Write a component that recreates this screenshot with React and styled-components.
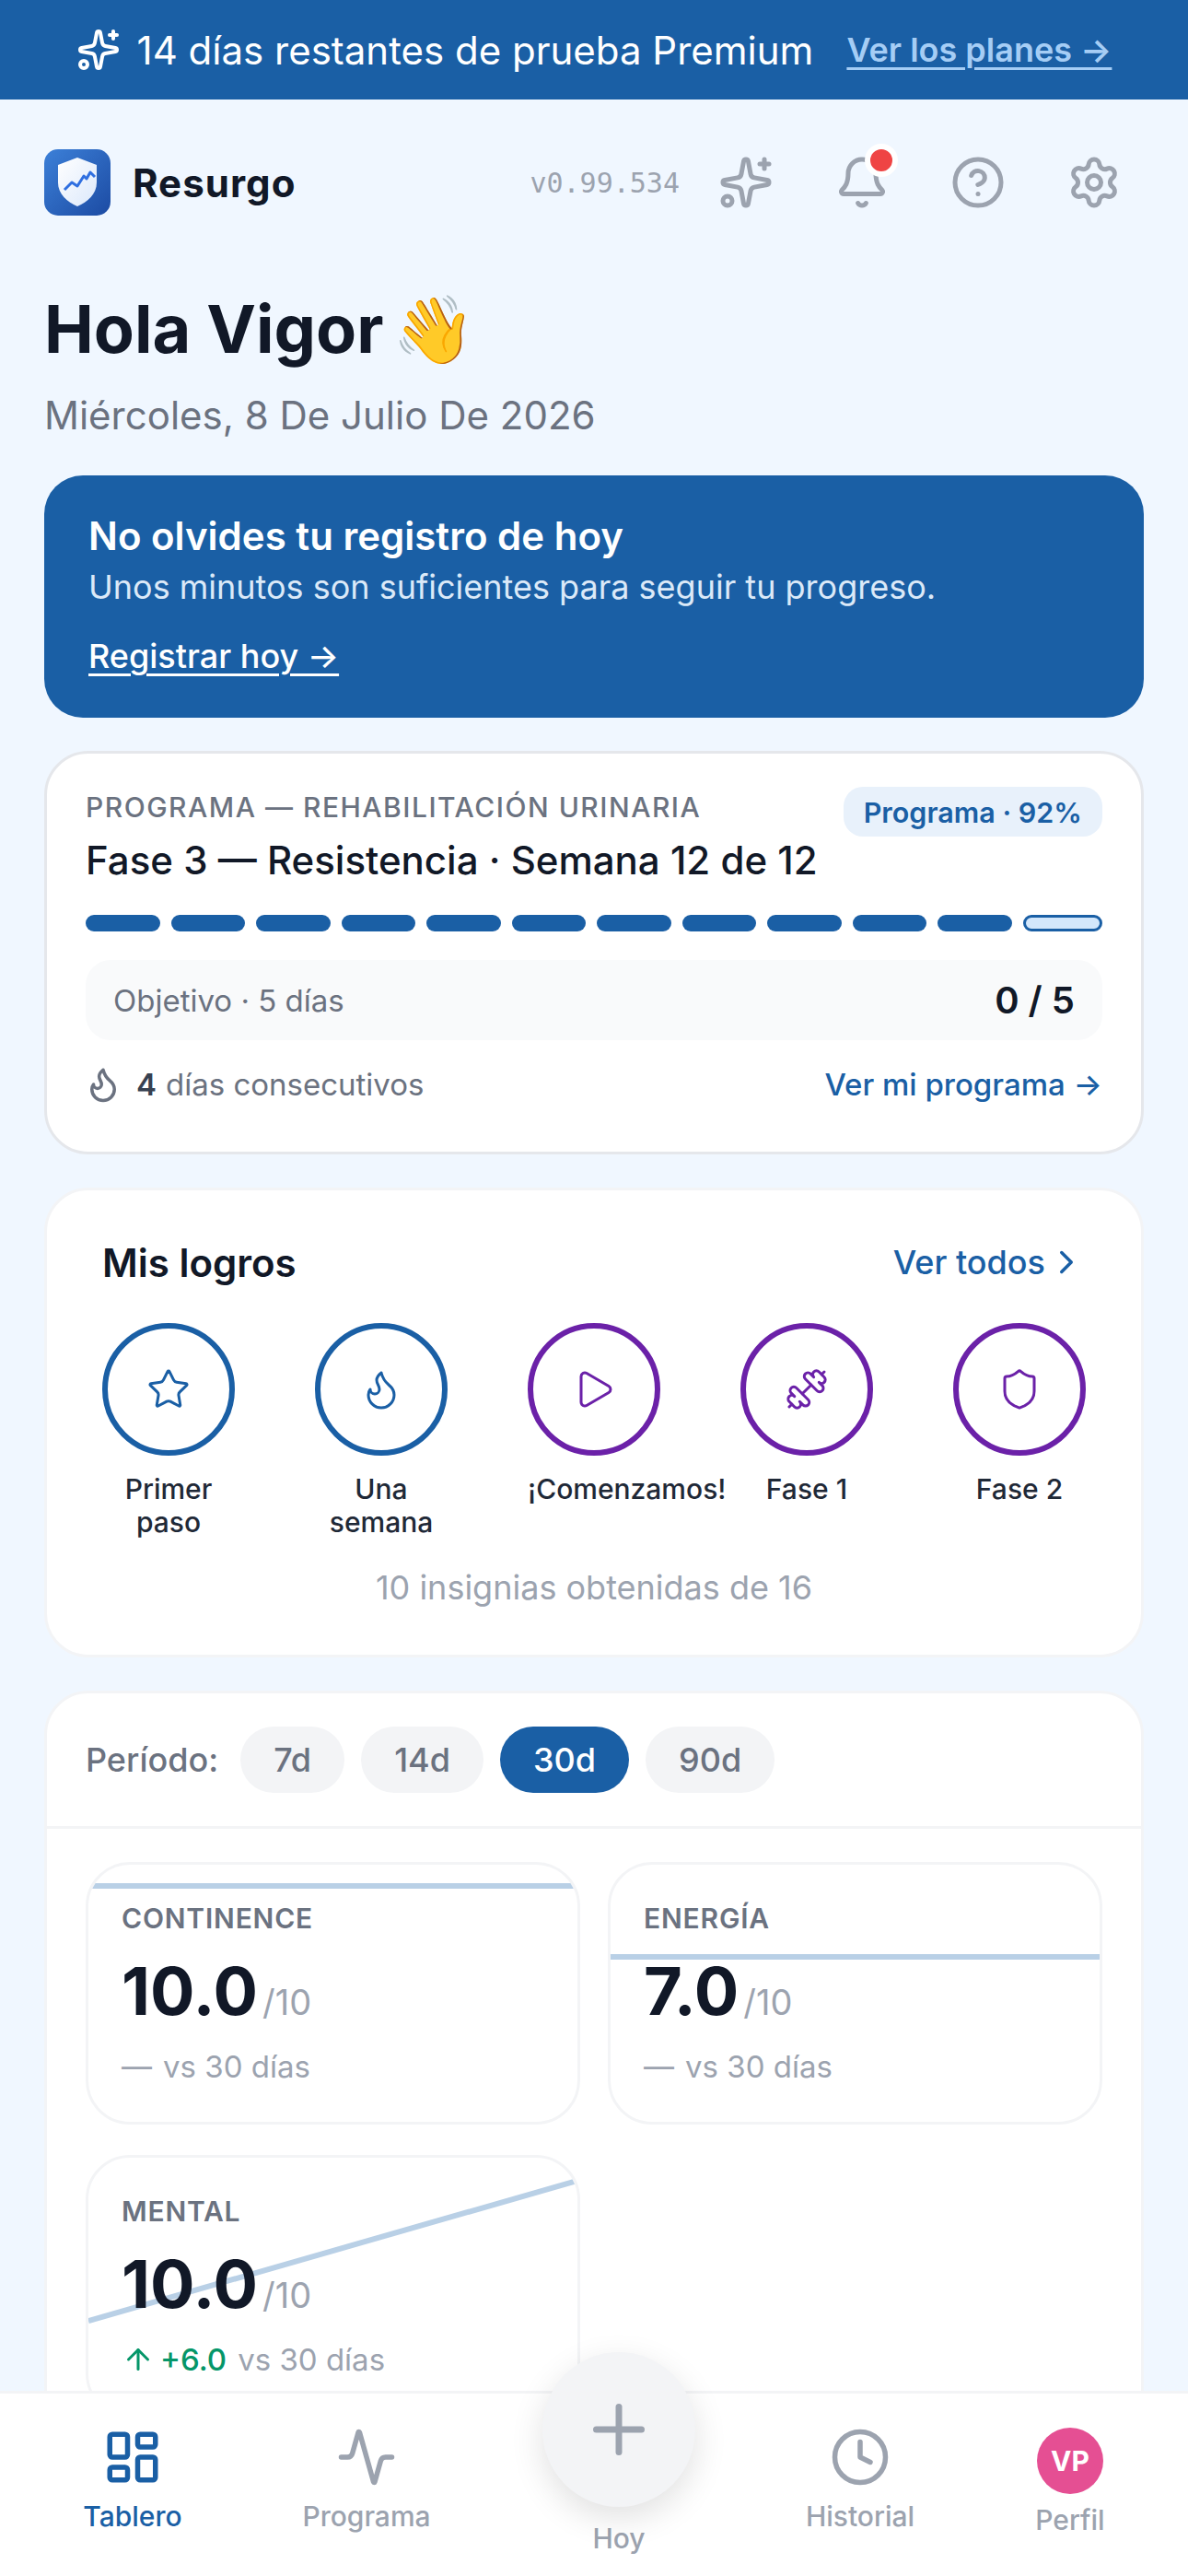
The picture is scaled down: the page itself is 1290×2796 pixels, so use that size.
import React from 'react'
import styled, { createGlobalStyle } from 'styled-components'
import {
  Activity,
  ArrowUp,
  Bell,
  ChevronRight,
  CircleHelp,
  Clock,
  Dumbbell,
  Flame,
  LayoutDashboard,
  Play,
  Plus,
  Settings,
  Shield,
  Sparkles,
  Star,
} from 'lucide-react'

const BLUE = '#1a5fa5'
const PURPLE = '#6b21a8'

const GlobalStyle = createGlobalStyle`
  html, body, #root {
    margin: 0;
    height: 100%;
  }
  body {
    font-family: Inter, "Noto Sans", sans-serif;
    background: #f0f7ff;
    color: #111827;
    overflow: hidden;
  }
  * {
    box-sizing: border-box;
  }
`

const Screen = styled.div`
  height: 2796px;
  display: flex;
  flex-direction: column;
  position: relative;
  overflow: hidden;
`

const TrialBar = styled.div`
  height: 108px;
  flex: none;
  background: ${BLUE};
  color: #fff;
  display: flex;
  align-items: center;
  justify-content: center;
  gap: 36px;
  font-size: 42px;
`

const TrialText = styled.span`
  display: flex;
  align-items: center;
  gap: 18px;
`

const TrialLink = styled.a`
  font-size: 36px;
  font-weight: 600;
  color: #a5cdf5;
  text-decoration: underline;
  text-decoration-thickness: 3px;
  text-underline-offset: 6px;
`

const Content = styled.main`
  flex: 1;
  min-height: 0;
  overflow: hidden;
  padding: 54px 48px 0;
`

const Header = styled.header`
  display: flex;
  align-items: center;
  height: 72px;
`

const Brand = styled.div`
  display: flex;
  align-items: center;
  gap: 24px;
  font-size: 42px;
  font-weight: 700;
  letter-spacing: 1.05px;
  margin-right: auto;
`

const Version = styled.span`
  font-family: "DejaVu Sans Mono", monospace;
  font-size: 30px;
  color: #9ca3af;
  margin-right: 39px;
`

const HeaderIcons = styled.div`
  display: flex;
  align-items: center;
  gap: 60px;
  color: #9ca3af;
  margin-right: 21px;
`

const IconSlot = styled.span`
  position: relative;
  width: 66px;
  height: 66px;
  display: flex;
  align-items: center;
  justify-content: center;
`

const AlertDot = styled.span`
  position: absolute;
  top: -9px;
  right: -6px;
  width: 36px;
  height: 36px;
  border-radius: 50%;
  background: #ef4444;
  border: 6px solid #fff;
`

const Greeting = styled.h1`
  margin: 69px 0 0;
  font-size: 72px;
  line-height: 108px;
  font-weight: 700;
  display: flex;
  align-items: center;
  gap: 9px;
`

const DateLine = styled.p`
  margin: 8px 0 0;
  font-size: 42px;
  line-height: 63px;
  color: #6b7280;
`

const Reminder = styled.section`
  margin-top: 34px;
  height: 263px;
  background: ${BLUE};
  border-radius: 42px;
  padding: 38px 48px;
  color: #fff;
`

const ReminderTitle = styled.div`
  font-size: 42px;
  line-height: 56px;
  font-weight: 600;
`

const ReminderText = styled.div`
  font-size: 36px;
  line-height: 54px;
  color: #dbe9f8;
`

const ReminderLink = styled.a`
  display: inline-block;
  margin-top: 27px;
  font-size: 36px;
  line-height: 42px;
  font-weight: 500;
  text-decoration: underline;
  text-decoration-thickness: 3px;
  text-underline-offset: 6px;
`

const Card = styled.section`
  margin-top: 36px;
  background: #fff;
  border-radius: 48px;
  border: 3px solid ${p => p.$line};
`

const ProgramCard = styled(Card)`
  height: 438px;
  padding: 34px 42px;
`

const ProgramHead = styled.div`
  display: flex;
  justify-content: space-between;
  align-items: flex-start;
`

const Eyebrow = styled.div`
  font-size: 30px;
  line-height: 48px;
  font-weight: 500;
  letter-spacing: 1.5px;
  color: #6b7280;
  text-transform: uppercase;
`

const ProgramTitle = styled.div`
  font-size: 42px;
  line-height: 60px;
  font-weight: 500;
  margin-top: 4px;
`

const ProgressPill = styled.span`
  height: 54px;
  margin-top: 2px;
  padding: 0 22px;
  border-radius: 21px;
  background: #e8f1fb;
  color: ${BLUE};
  font-size: 30.5px;
  font-weight: 600;
  display: flex;
  align-items: center;
`

const Weeks = styled.div`
  display: flex;
  gap: 12px;
  margin-top: 29px;
`

const Week = styled.span`
  flex: 1;
  height: 18px;
  border-radius: 9px;
  background: ${p => (p.$current ? '#d3e7fb' : BLUE)};
  border: ${p => (p.$current ? `3px solid ${BLUE}` : 'none')};
`

const GoalBox = styled.div`
  margin-top: 31px;
  height: 87px;
  border-radius: 27px;
  background: #f9fafb;
  padding: 0 30px;
  display: flex;
  align-items: center;
  justify-content: space-between;
  font-size: 33px;
  color: #6b7280;
`

const GoalCount = styled.span`
  font-size: 40px;
  font-weight: 600;
  color: #111827;
`

const ProgramFoot = styled.div`
  margin-top: 27px;
  display: flex;
  align-items: center;
  justify-content: space-between;
  font-size: 33px;
`

const Streak = styled.span`
  display: flex;
  align-items: center;
  gap: 15px;
  margin-left: -2px;
  color: #6b7280;
  b {
    color: #374151;
    font-weight: 600;
    margin-right: -5px;
  }
`

const BlueLink = styled.a`
  display: inline-flex;
  align-items: center;
  gap: ${p => p.$gap || 9}px;
  color: ${BLUE};
  font-size: ${p => p.$size}px;
  font-weight: 500;
`

const AchievementsCard = styled(Card)`
  height: 510px;
  padding: 51px 60px 0;
`

const AchievementsHead = styled.div`
  display: flex;
  justify-content: space-between;
  align-items: center;
  height: 54px;
`

const AchievementsTitle = styled.h2`
  margin: 0;
  font-size: 42px;
  font-weight: 600;
`

const BadgeRow = styled.div`
  display: flex;
  justify-content: space-between;
  margin-top: 39px;
`

const Badge = styled.div`
  width: 144px;
  font-size: 30px;
  line-height: 36px;
  font-weight: 500;
  text-align: center;
  color: #1f2937;
`

const BadgeRing = styled.div`
  width: 144px;
  height: 144px;
  border-radius: 50%;
  border: 6px solid ${p => p.$color};
  color: ${p => p.$color};
  display: flex;
  align-items: center;
  justify-content: center;
  margin-bottom: 18px;
`

const BadgeSummary = styled.p`
  margin: 26px 0 0;
  text-align: center;
  font-size: 36px;
  line-height: 54px;
  color: #9ca3af;
`

const StatsCard = styled(Card)`
  height: 1000px;
`

const PeriodBar = styled.div`
  height: 147px;
  padding: 0 42px;
  display: flex;
  align-items: center;
  gap: 18px;
  border-bottom: 3px solid #f3f4f6;
`

const PeriodLabel = styled.span`
  font-size: 36px;
  font-weight: 500;
  color: #6b7280;
  margin-right: 6px;
`

const PeriodPill = styled.span`
  height: 72px;
  padding: 0 36px;
  border-radius: 36px;
  display: flex;
  align-items: center;
  font-size: 36px;
  font-weight: 500;
  background: ${p => (p.$active ? BLUE : '#f3f4f6')};
  color: ${p => (p.$active ? '#fff' : '#6b7280')};
`

const TileGrid = styled.div`
  display: grid;
  grid-template-columns: 1fr 1fr;
  gap: 33px 30px;
  padding: 36px 42px;
`

const Tile = styled.article`
  position: relative;
  height: 285px;
  padding: 37px 36px 0;
  border: 3px solid #f3f4f6;
  border-radius: 48px;
  overflow: hidden;
`

const Spark = styled.svg`
  position: absolute;
  inset: 0;
  width: 100%;
  height: 100%;
`

const TileLabel = styled.div`
  position: relative;
  font-size: 30px;
  line-height: 42px;
  font-weight: 600;
  letter-spacing: 0.8px;
  color: #6b7280;
  text-transform: uppercase;
`

const TileValue = styled.div`
  position: relative;
  margin-top: 16px;
  display: flex;
  align-items: baseline;
  gap: 5px;
  font-size: 72px;
  line-height: 84px;
  font-weight: 700;
  span {
    font-size: 38px;
    font-weight: 400;
    color: #9ca3af;
  }
`

const TileDelta = styled.div`
  position: relative;
  margin-top: 4px;
  display: flex;
  align-items: center;
  gap: 12px;
  font-size: 33px;
  line-height: 48px;
  color: #9ca3af;
`

const Gain = styled.span`
  display: flex;
  align-items: center;
  gap: 6px;
  color: #059669;
  font-weight: 500;
`

const BottomNav = styled.nav`
  flex: none;
  position: relative;
  height: 201px;
  background: #fff;
  border-top: 3px solid #f3f4f6;
  display: grid;
  grid-template-columns: 288px 220px 328px 196px 258px;
  justify-items: center;
`

const NavItem = styled.div`
  display: flex;
  flex-direction: column;
  align-items: center;
  padding-top: 36px;
  gap: 9px;
  font-size: 30px;
  line-height: 45px;
  font-weight: 500;
  color: ${p => (p.$active ? BLUE : '#9ca3af')};
`

const TodaySlot = styled(NavItem)`
  position: relative;
  width: 168px;
  padding-top: 135px;
`

const TodayButton = styled.span`
  position: absolute;
  top: -45px;
  width: 166px;
  height: 168px;
  border-radius: 50%;
  background: #f3f4f6;
  color: #9ca3af;
  display: flex;
  align-items: center;
  justify-content: center;
  box-shadow: 0 12px 36px rgba(0, 0, 0, 0.12);
`

const ProfileItem = styled(NavItem)`
  margin-left: 2px;
  padding-top: 37px;
`

const Avatar = styled.span`
  width: 72px;
  height: 72px;
  margin-bottom: -3px;
  border-radius: 50%;
  background: #e54f93;
  color: #fff;
  font-size: 30px;
  font-weight: 700;
  display: flex;
  align-items: center;
  justify-content: center;
`

function Logo() {
  return (
    <svg width="72" height="72" viewBox="0 0 72 72">
      <defs>
        <linearGradient id="logoBg" x1="0" y1="0" x2="1" y2="1">
          <stop offset="0" stopColor="#3c80d8" />
          <stop offset="1" stopColor="#1c4ba3" />
        </linearGradient>
        <linearGradient id="logoShield" x1="0" y1="0" x2="1" y2="1">
          <stop offset="0" stopColor="#ffffff" />
          <stop offset="1" stopColor="#dbe8fb" />
        </linearGradient>
      </defs>
      <rect width="72" height="72" rx="15" fill="url(#logoBg)" />
      <path
        d="M36 9 L57 17 V36 C57 49 47 57 36 62 C25 57 15 49 15 36 V17 Z"
        fill="url(#logoShield)"
      />
      <path
        d="M22 44 L30 36 L36 40 L43 29 L46 32 L50 25 L55 30"
        fill="none"
        stroke="#2f6fe0"
        strokeWidth="3"
        strokeLinejoin="round"
      />
    </svg>
  )
}

const badges = [
  { label: 'Primer paso', Icon: Star, color: BLUE },
  { label: 'Una semana', Icon: Flame, color: BLUE },
  { label: '¡Comenzamos!', Icon: Play, color: PURPLE },
  { label: 'Fase 1', Icon: Dumbbell, color: PURPLE },
  { label: 'Fase 2', Icon: Shield, color: PURPLE },
]

const tiles = [
  { label: 'Continence', value: '10.0', line: [23, 23] },
  { label: 'Energía', value: '7.0', line: [100, 100] },
  { label: 'Mental', value: '10.0', line: [177, 25], gain: '+6.0' },
]

export default function App() {
  return (
    <Screen>
      <GlobalStyle />
      <TrialBar>
        <TrialText>
          <Sparkles size={48} strokeWidth={2} />
          14 días restantes de prueba Premium
        </TrialText>
        <TrialLink>Ver los planes →</TrialLink>
      </TrialBar>

      <Content>
        <Header>
          <Brand>
            <Logo />
            Resurgo
          </Brand>
          <Version>v0.99.534</Version>
          <HeaderIcons>
            <IconSlot>
              <Sparkles size={60} strokeWidth={2} />
            </IconSlot>
            <IconSlot>
              <Bell size={60} strokeWidth={2} />
              <AlertDot />
            </IconSlot>
            <IconSlot>
              <CircleHelp size={60} strokeWidth={2} />
            </IconSlot>
            <IconSlot>
              <Settings size={60} strokeWidth={2} />
            </IconSlot>
          </HeaderIcons>
        </Header>

        <Greeting>
          Hola Vigor <span>👋</span>
        </Greeting>
        <DateLine>Miércoles, 8 De Julio De 2026</DateLine>

        <Reminder>
          <ReminderTitle>No olvides tu registro de hoy</ReminderTitle>
          <ReminderText>Unos minutos son suficientes para seguir tu progreso.</ReminderText>
          <ReminderLink>Registrar hoy →</ReminderLink>
        </Reminder>

        <ProgramCard $line="#e5e7eb">
          <ProgramHead>
            <div>
              <Eyebrow>Programa — Rehabilitación urinaria</Eyebrow>
              <ProgramTitle>Fase 3 — Resistencia · Semana 12 de 12</ProgramTitle>
            </div>
            <ProgressPill>Programa · 92%</ProgressPill>
          </ProgramHead>
          <Weeks>
            {Array.from({ length: 12 }, (_, i) => (
              <Week key={i} $current={i === 11} />
            ))}
          </Weeks>
          <GoalBox>
            Objetivo · 5 días
            <GoalCount>0 / 5</GoalCount>
          </GoalBox>
          <ProgramFoot>
            <Streak>
              <Flame size={42} strokeWidth={2} />
              <b>4</b> días consecutivos
            </Streak>
            <BlueLink $size={33}>Ver mi programa →</BlueLink>
          </ProgramFoot>
        </ProgramCard>

        <AchievementsCard $line="#f3f4f6">
          <AchievementsHead>
            <AchievementsTitle>Mis logros</AchievementsTitle>
            <BlueLink $size={36} $gap={2}>
              Ver todos <ChevronRight size={42} />
            </BlueLink>
          </AchievementsHead>
          <BadgeRow>
            {badges.map(({ label, Icon, color }) => (
              <Badge key={label}>
                <BadgeRing $color={color}>
                  <Icon size={48} strokeWidth={1.5} />
                </BadgeRing>
                {label}
              </Badge>
            ))}
          </BadgeRow>
          <BadgeSummary>10 insignias obtenidas de 16</BadgeSummary>
        </AchievementsCard>

        <StatsCard $line="#f3f4f6">
          <PeriodBar>
            <PeriodLabel>Período:</PeriodLabel>
            <PeriodPill>7d</PeriodPill>
            <PeriodPill>14d</PeriodPill>
            <PeriodPill $active>30d</PeriodPill>
            <PeriodPill>90d</PeriodPill>
          </PeriodBar>
          <TileGrid>
            {tiles.map(({ label, value, line, gain }) => (
              <Tile key={label}>
                <Spark viewBox="0 0 531 279" preserveAspectRatio="none">
                  <line x1="0" y1={line[0]} x2="531" y2={line[1]} stroke="#b9d0e6" strokeWidth="6" />
                </Spark>
                <TileLabel>{label}</TileLabel>
                <TileValue>
                  {value}
                  <span>/10</span>
                </TileValue>
                <TileDelta>
                  {gain ? (
                    <Gain>
                      <ArrowUp size={36} />
                      {gain}
                    </Gain>
                  ) : (
                    <span>—</span>
                  )}
                  vs 30 días
                </TileDelta>
              </Tile>
            ))}
          </TileGrid>
        </StatsCard>
      </Content>

      <BottomNav>
        <NavItem $active>
          <LayoutDashboard size={66} strokeWidth={2} />
          Tablero
        </NavItem>
        <NavItem>
          <Activity size={66} strokeWidth={2} />
          Programa
        </NavItem>
        <TodaySlot>
          <TodayButton>
            <Plus size={84} strokeWidth={2} />
          </TodayButton>
          Hoy
        </TodaySlot>
        <NavItem>
          <Clock size={66} strokeWidth={2} />
          Historial
        </NavItem>
        <ProfileItem>
          <Avatar>VP</Avatar>
          Perfil
        </ProfileItem>
      </BottomNav>
    </Screen>
  )
}
